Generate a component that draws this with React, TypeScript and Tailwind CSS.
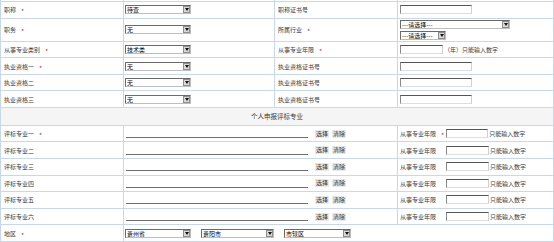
import type { ReactNode } from 'react';

const line = 'border-[#c8d7e9]';

function Star() {
  return <span className="relative top-[2px] ml-[5px] text-[7px] leading-none text-[#e0282e]">*</span>;
}

function Select({ value, className }: { value: string; className: string }) {
  return (
    <div
      className={`flex h-[9px] items-stretch border border-t-[#6a6a6a] border-l-[#6a6a6a] border-r-[#bdbdbd] border-b-[#bdbdbd] bg-white ${className}`}
    >
      <span className="flex-1 overflow-hidden whitespace-nowrap pl-[1px] text-[6px] leading-[7px] text-black">{value}</span>
      <span className="flex w-[7px] items-center justify-center border border-[#8e8e8e] bg-[#d9d9d9]">
        <svg width="4" height="3" viewBox="0 0 4 3">
          <path d="M0 0h4L2 3z" fill="#111" />
        </svg>
      </span>
    </div>
  );
}

function TextBox({ className }: { className: string }) {
  return (
    <input
      readOnly
      className={`h-[9px] border border-t-[#555] border-l-[#888] border-r-[#cfcfcf] border-b-[#dedede] bg-white ${className}`}
    />
  );
}

function Cell({ children, className = '' }: { children?: ReactNode; className?: string }) {
  return <div className={`flex items-center border-r ${line} ${className}`}>{children}</div>;
}

function Label({ text, required }: { text: string; required?: boolean }) {
  return (
    <Cell className="pl-[3px] text-[6px] text-[#3a3a3a]">
      {text}
      {required && <Star />}
    </Cell>
  );
}

function Row({ children, h = 'h-[16.6px]', cols = 'grid-cols-[123px_151px_123px_1fr]' }: { children: ReactNode; h?: string; cols?: string }) {
  return <div className={`grid ${cols} ${h} border-b ${line}`}>{children}</div>;
}

const specialties = ['评标专业一', '评标专业二', '评标专业三', '评标专业四', '评标专业五', '评标专业六'];

export default function App() {
  return (
    <div className="h-[242px] w-[554px] overflow-hidden bg-white font-['SimSun','Noto_Sans_CJK_SC',sans-serif]">
      <div className={`border-l ${line}`}>
        <div className={`grid h-[1.7px] grid-cols-[123px_151px_123px_1fr] border-b ${line}`}>
          <Cell />
          <Cell />
          <Cell />
          <Cell />
        </div>

        <Row h="h-[17.3px]">
          <Label text="职称" required />
          <Cell className="pl-[1px]">
            <Select value="待查" className="w-[66px]" />
          </Cell>
          <Label text="职称证书号" />
          <Cell className="pl-[2px]">
            <TextBox className="w-[72px]" />
          </Cell>
        </Row>

        <Row h="h-[22.7px]">
          <Label text="职务" required />
          <Cell className="pl-[1px]">
            <Select value="无" className="w-[66px]" />
          </Cell>
          <Label text="所属行业" required />
          <Cell className="flex-col items-start justify-center gap-[2px] pl-[2px]">
            <Select value="---请选择---" className="w-[110px]" />
            <Select value="---请选择---" className="w-[46px]" />
          </Cell>
        </Row>

        <Row>
          <Label text="从事专业类别" required />
          <Cell className="pl-[1px]">
            <Select value="技术类" className="w-[66px]" />
          </Cell>
          <Label text="从事专业年限" required />
          <Cell className="pl-[2px] text-[6px] text-[#3a3a3a]">
            <TextBox className="w-[43px]" />
            <span className="ml-[1px]">（年）只能输入数字</span>
          </Cell>
        </Row>

        {[
          ['执业资格一', true],
          ['执业资格二', false],
          ['执业资格三', false],
        ].map(([name, req]) => (
          <Row key={name as string}>
            <Label text={name as string} required={req as boolean} />
            <Cell className="pl-[1px]">
              <Select value="无" className="w-[66px]" />
            </Cell>
            <Label text="执业资格证书号" />
            <Cell className="pl-[2px]">
              <TextBox className="w-[72px]" />
            </Cell>
          </Row>
        ))}

        <div className={`flex h-[17.7px] items-center justify-center border-b border-r ${line} bg-[#f5f5f5] text-[6.5px] text-[#3a3a3a]`}>
          个人申报评标专业
        </div>

        {specialties.map((name, i) => (
          <Row key={name} cols="grid-cols-[123px_274px_1fr]">
            <Label text={name} required={i === 0} />
            <Cell className="pl-[2px]">
              <div className="mt-[1px] h-[8px] w-[182px] border-b border-[#6e6e6e]" />
              <div className="ml-[7px] flex gap-[3px] text-[6px] text-[#333]">
                <span className="bg-[#e9e9e9] px-[1px] leading-[8px]">选择</span>
                <span className="bg-[#e9e9e9] px-[1px] leading-[8px]">清除</span>
              </div>
            </Cell>
            <Cell className="pl-[2px] text-[6px] text-[#3a3a3a]">
              <span>从事专业年限</span>
              {i === 0 ? <Star /> : <span className="w-[8px]" />}
              <TextBox className={i === 0 ? 'ml-[2px] w-[42px]' : 'ml-[2px] w-[43px]'} />
              <span className="ml-[1px]">只能输入数字</span>
            </Cell>
          </Row>
        ))}

        <Row cols="grid-cols-[123px_1fr]">
          <Label text="地区" required />
          <Cell className="gap-[10px] pl-[1px]">
            <Select value="贵州省" className="w-[66px]" />
            <Select value="贵阳市" className="w-[73px]" />
            <Select value="市辖区" className="w-[67px]" />
          </Cell>
        </Row>

        <Row>
          <Cell />
          <Cell />
          <Cell />
          <Cell />
        </Row>
      </div>
    </div>
  );
}
